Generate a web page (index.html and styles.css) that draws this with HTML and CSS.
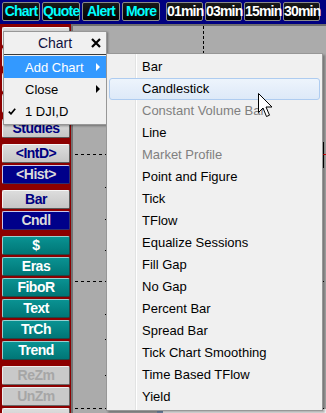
FILE: index.html
```html
<!doctype html>
<html lang="en">
	<head>
		<title>Chart</title>
		<meta charset="utf-8">
		<link rel="stylesheet" href="styles.css">
	</head>
	<body>
<div class="toolbar">
	<div class="tb-group">
		<span class="tb-btn cyan">Chart</span>
		<span class="tb-btn cyan">Quote</span>
		<span class="tb-btn cyan">Alert</span>
		<span class="tb-btn cyan">More</span>
	</div>
	<div class="tb-group mins">
		<span class="tb-btn">01min</span>
		<span class="tb-btn">03min</span>
		<span class="tb-btn">15min</span>
		<span class="tb-btn">30min</span>
	</div>
</div>

<div class="main">
	<div class="sidebar">
		<div class="sb-btn gray"></div>
		<div class="sb-btn gray group-end"></div>
		<div class="sb-btn gray"></div>
		<div class="sb-btn gray group-end"></div>
		<div class="sb-btn gray group-end">Studies</div>
		<div class="sb-btn gray">&lt;IntD&gt;</div>
		<div class="sb-btn navy group-end">&lt;Hist&gt;</div>
		<div class="sb-btn gray">Bar</div>
		<div class="sb-btn navy group-end">Cndl</div>
		<div class="sb-btn teal">$</div>
		<div class="sb-btn teal">Eras</div>
		<div class="sb-btn teal">FiboR</div>
		<div class="sb-btn teal">Text</div>
		<div class="sb-btn teal">TrCh</div>
		<div class="sb-btn teal group-end">Trend</div>
		<div class="sb-btn off">ReZm</div>
		<div class="sb-btn off">UnZm</div>
		<div class="sb-btn gray"></div>
	</div>
	<div class="chart">
		<div class="grid-v" style="left: 130px"></div>
		<div class="grid-h" style="top: 128px"></div>
		<div class="grid-h" style="top: 255px"></div>
		<div class="grid-h" style="top: 382px"></div>
		<div class="tick" style="top: 161px"></div>
		<div class="tick" style="top: 193px"></div>
		<div class="tick" style="top: 224px"></div>
		<div class="tick" style="top: 288px"></div>
		<div class="tick" style="top: 313px"></div>
		<div class="tick" style="top: 349px"></div>
		<div class="candle" style="left: 250px; top: 116px"></div>
		<div class="popup-edge"></div>
	</div>
</div>

<div class="menu">
	<div class="menu-head">
		<span></span>
		<span class="menu-title">Chart</span>
		<svg class="menu-close" width="10" height="10" viewBox="0 0 10 10"><path d="M1 1 L9 9 M9 1 L1 9" stroke="#000" stroke-width="2.2"/></svg>
	</div>
	<div class="menu-list">
		<div class="menu-item active">Add Chart <span class="arrow"></span></div>
		<div class="menu-item">Close <span class="arrow"></span></div>
		<div class="menu-item">
			<svg class="check" width="8" height="7" viewBox="0 0 8 7"><path d="M0.8 3.6 L3 5.8 L7.2 0.8" fill="none" stroke="#000" stroke-width="1.7"/></svg>
			1 DJI,D
		</div>
	</div>
</div>

<div class="submenu">
	<div class="sub-item">Bar</div>
	<div class="sub-item hover">Candlestick</div>
	<div class="sub-item dim">Constant Volume Bar</div>
	<div class="sub-item">Line</div>
	<div class="sub-item dim">Market Profile</div>
	<div class="sub-item">Point and Figure</div>
	<div class="sub-item">Tick</div>
	<div class="sub-item">TFlow</div>
	<div class="sub-item">Equalize Sessions</div>
	<div class="sub-item">Fill Gap</div>
	<div class="sub-item">No Gap</div>
	<div class="sub-item">Percent Bar</div>
	<div class="sub-item">Spread Bar</div>
	<div class="sub-item">Tick Chart Smoothing</div>
	<div class="sub-item">Time Based TFlow</div>
	<div class="sub-item">Yield</div>
</div>

<svg class="cursor" width="15" height="25" viewBox="0 0 15 25">
	<path d="M0.5 0.5 V19.5 L5 15 L8.5 23.5 L11.5 22.2 L8 14 H14 Z" fill="#fff" stroke="#000" stroke-width="1" stroke-linejoin="miter"/>
</svg>
	</body>
</html>
```

FILE: styles.css
```css
* { box-sizing: border-box; margin: 0; padding: 0; }
html, body { height: 100%; }
body {
	width: 326px;
	height: 413px;
	overflow: hidden;
	position: relative;
	background: #ababab;
	font-family: "Liberation Sans", Arial, sans-serif;
	font-size: 13px;
}

/* top toolbar */
.toolbar {
	height: 24px;
	background: #000080;
	display: flex;
	padding: 2px 0 0 2px;
}
.tb-group { display: flex; gap: 2px; }
.tb-group.mins { margin-left: 6px; }
.tb-btn {
	display: block;
	width: 38px;
	height: 19px;
	background: linear-gradient(#1a1a1a, #000);
	border: 1px solid #8a8a8a;
	border-radius: 2px;
	color: #fff;
	font-weight: bold;
	font-size: 14px;
	line-height: 17px;
	letter-spacing: -0.8px;
	text-align: center;
}
.mins .tb-btn { width: 37px; }
.tb-btn.cyan { color: #00ffff; }

/* main area */
.main { display: flex; height: 389px; }
.sidebar {
	width: 71px;
	background: #8c0000;
	padding: 3px 0 0 2px;
}
.sb-btn {
	width: 68px;
	height: 19px;
	margin-bottom: 2px;
	border: 1px solid;
	border-radius: 2px;
	font-weight: bold;
	font-size: 14px;
	line-height: 17px;
	letter-spacing: -0.5px;
	text-align: center;
}
.sb-btn.group-end { margin-bottom: 6px; }
.gray {
	background: linear-gradient(#dcdcdc, #c6c6c6);
	color: #000080;
	border-color: #f6f6f6 #5a5a5a #5a5a5a #f6f6f6;
}
.navy {
	background: #00008a;
	color: #dcdcdc;
	border-color: #c8c8ec #303070 #303070 #c8c8ec;
}
.teal {
	background: linear-gradient(#0a9292, #007676);
	color: #fff;
	border-color: #9ad0d0 #204848 #204848 #9ad0d0;
}
.off {
	background: #c9c9c9;
	color: #a6a6a6;
	border-color: #eeeeee #6a6a6a #6a6a6a #eeeeee;
}

.chart {
	flex: 1;
	position: relative;
	background: #ababab;
	border-left: 2px solid #727272;
	border-top: 2px solid #6e6e6e;
}
.grid-v {
	position: absolute;
	top: 0;
	bottom: 0;
	width: 1px;
	background: repeating-linear-gradient(to bottom, #000 0 3px, transparent 3px 5px);
}
.grid-h {
	position: absolute;
	left: 2px;
	right: 0;
	height: 1px;
	background: repeating-linear-gradient(to right, #000 0 3px, transparent 3px 6px);
}
.tick { position: absolute; left: 32px; width: 2px; height: 1px; background: #000; }
.candle { position: absolute; width: 1px; height: 26px; background: #000; }
.candle::after {
	content: "";
	position: absolute;
	left: 0;
	top: 12px;
	width: 3px;
	height: 1px;
	background: #e00000;
}
.popup-edge {
	position: absolute;
	left: 84px;
	bottom: 0;
	width: 170px;
	height: 4px;
	background: linear-gradient(to right, #7b93b5 0 6px, #fff 6px);
}

/* context menu */
.menu {
	position: absolute;
	left: 3px;
	top: 31px;
	width: 104px;
	background: #f0f0f0;
	border: 1px solid #979797;
	box-shadow: 1px 1px 2px rgba(0, 0, 0, 0.35);
}
.menu-head {
	height: 23px;
	display: grid;
	grid-template-columns: 1fr auto 1fr;
	align-items: center;
	border-bottom: 1px solid #3a3a3a;
	color: #101040;
	font-size: 14px;
}
.menu-close {
	justify-self: end;
	margin-right: 5px;
}
.menu-list { padding: 1px 0 2px; }
.menu-item {
	height: 22px;
	display: flex;
	align-items: center;
	padding-left: 21px;
	color: #000;
	position: relative;
}
.menu-item.active { background: #3399ff; color: #fff; }
.arrow {
	margin-left: auto;
	margin-right: 6px;
	width: 0;
	height: 0;
	border-left: 4px solid #000;
	border-top: 4px solid transparent;
	border-bottom: 4px solid transparent;
}
.active .arrow { border-left-color: #fff; }
.check { position: absolute; left: 4px; top: 8px; }

.submenu {
	position: absolute;
	left: 106px;
	top: 53px;
	width: 217px;
	padding: 2px;
	background: #f0f0f0 linear-gradient(to right, transparent 28px, #e2e3e3 28px, #e2e3e3 29px, #fff 29px, #fff 30px, transparent 30px);
	border: 1px solid #979797;
	box-shadow: 2px 2px 2px rgba(0, 0, 0, 0.3);
}
.sub-item {
	height: 22px;
	line-height: 20px;
	padding-left: 32px;
	color: #000;
	border: 1px solid transparent;
	border-radius: 3px;
}
.sub-item.hover {
	background: linear-gradient(#edf4fc, #dde9f8);
	border-color: #aeccf0;
}
.sub-item.dim { color: #808080; }

.cursor { position: absolute; left: 258px; top: 93px; }
```
